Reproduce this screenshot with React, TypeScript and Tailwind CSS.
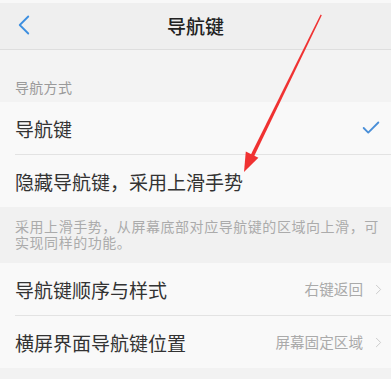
import { ChevronLeft, ChevronRight, Check } from "lucide-react";

const font = { fontFamily: '"Noto Sans CJK SC", "Noto Sans", sans-serif' };

function Row({ title, value, check }: { title: string; value?: string; check?: boolean }) {
  return (
    <div className="flex h-[52px] items-center bg-[#f9f9f9] pl-[15px] pr-[4px]">
      <span className="flex-1 text-[19px] leading-none text-[#333]">{title}</span>
      {value && (
        <span className="flex items-center gap-[7px] text-[14.6px] leading-none text-[#aaaaaa]">
          {value}
          <ChevronRight size={17} strokeWidth={1.3} className="text-[#c8c8c8]" />
        </span>
      )}
      {check && <Check size={22} strokeWidth={2} className="mr-[5px] text-[#4a8fd8]" />}
    </div>
  );
}

function Divider() {
  return (
    <div className="bg-[#f9f9f9] pl-[15px]">
      <div className="h-px bg-[#e3e3e3]" />
    </div>
  );
}

export default function App() {
  return (
    <div className="relative h-[379px] w-[391px] overflow-hidden bg-[#f2f2f2]" style={font}>
      <div className="h-[3px] bg-[#f8f8f8]" />

      {/* Header */}
      <div className="relative flex h-[47px] items-center justify-center border-b border-[#dedede] bg-[#efefef]">
        <ChevronLeft size={34} strokeWidth={1.3} className="absolute left-[7px] top-[5px] text-[#3d8fe0]" />
        <span className="text-[19px] font-medium text-[#222]">导航键</span>
      </div>

      <div className="flex h-[52px] items-end bg-[#f3f3f3] pb-[8px] pl-[15px]">
        <span className="text-[14px] leading-[14px] tracking-[0.3px] text-[#9a9a9a]">导航方式</span>
      </div>

      <Row title="导航键" check />
      <Divider />
      <Row title="隐藏导航键，采用上滑手势" />

      <div className="h-[56px] bg-[#f1f1f1] pl-[15px] pr-[6px] pt-[11px]">
        <p className="text-[14px] leading-[16px] tracking-[0.55px] text-[#ababab]">
          采用上滑手势，从屏幕底部对应导航键的区域向上滑，可实现同样的功能。
        </p>
      </div>

      <Row title="导航键顺序与样式" value="右键返回" />
      <Divider />
      <Row title="横屏界面导航键位置" value="屏幕固定区域" />

      {/* Red annotation arrow */}
      <svg className="absolute left-0 top-0" width="391" height="379" viewBox="0 0 391 379">
        <polygon points="320.6,14.5 321.8,15.2 254,156.5 250.8,154.8" fill="#f03232" />
        <polygon points="244,172 245.8,151.5 258.4,157.8" fill="#f03232" />
      </svg>
    </div>
  );
}
